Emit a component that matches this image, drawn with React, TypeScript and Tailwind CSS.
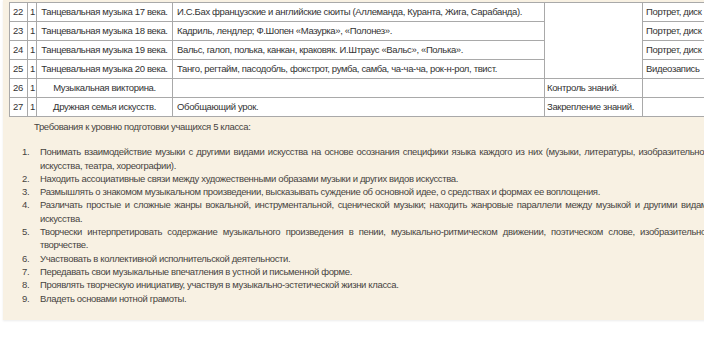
const rows = [
  { n: "22", h: "1", topic: "Танцевальная музыка 17 века.", content: "И.С.Бах французские и английские сюиты (Аллеманда, Куранта, Жига, Сарабанда).", aid: "Портрет, диск" },
  { n: "23", h: "1", topic: "Танцевальная музыка 18 века.", content: "Кадриль, лендлер; Ф.Шопен «Мазурка», «Полонез».", aid: "Портрет, диск" },
  { n: "24", h: "1", topic: "Танцевальная музыка 19 века.", content: "Вальс, галоп, полька, канкан, краковяк. И.Штраус «Вальс», «Полька».", aid: "Портрет, диск" },
  { n: "25", h: "1", topic: "Танцевальная музыка 20 века.", content: "Танго, регтайм, пасодобль, фокстрот, румба, самба, ча-ча-ча, рок-н-рол, твист.", aid: "Видеозапись" },
];

const requirements = [
  "Понимать взаимодействие музыки с другими видами искусства на основе осознания специфики языка каждого из них (музыки, литературы, изобразительного искусства, театра, хореографии).",
  "Находить ассоциативные связи между художественными образами музыки и других видов искусства.",
  "Размышлять о знакомом музыкальном произведении, высказывать суждение об основной идее, о средствах и формах ее воплощения.",
  "Различать простые и сложные жанры вокальной, инструментальной, сценической музыки; находить жанровые параллели между музыкой и другими видами искусства.",
  "Творчески интерпретировать содержание музыкального произведения в пении, музыкально-ритмическом движении, поэтическом слове, изобразительном творчестве.",
  "Участвовать в коллективной исполнительской деятельности.",
  "Передавать свои музыкальные впечатления в устной и письменной форме.",
  "Проявлять творческую инициативу, участвуя в музыкально-эстетической жизни класса.",
  "Владеть основами нотной грамоты.",
];

const td = "border border-[#a9a9a9] h-[19px] p-0 align-middle whitespace-nowrap overflow-hidden";

export default function App() {
  return (
    <div className="w-[704px] h-[346px] overflow-hidden bg-white font-['Liberation_Sans',Arial,sans-serif] text-[9.5px] tracking-[-0.35px]">
      <div className="w-[730px] ml-[3px] bg-[#f8f1e3] pt-[2px] pb-[15px] shadow-[0_1px_2px_rgba(0,0,0,0.08)]">
        <table className="ml-[6px] border-collapse bg-white text-[#333] table-fixed w-[704px]">
          <colgroup>
            <col className="w-[18px]" />
            <col className="w-[9px]" />
            <col className="w-[136px]" />
            <col className="w-[372px]" />
            <col className="w-[98px]" />
            <col className="w-[71px]" />
          </colgroup>
          <tbody>
            {rows.map((r, i) => (
              <tr key={r.n}>
                <td className={`${td} pl-[3px]`}>{r.n}</td>
                <td className={`${td} pl-[2px]`}>{r.h}</td>
                <td className={`${td} text-center`}>{r.topic}</td>
                <td className={`${td} pl-[4px]`}>{r.content}</td>
                {i === 0 && <td rowSpan={4} className={td}></td>}
                <td className={`${td} pl-[3px]`}>{r.aid}</td>
              </tr>
            ))}
            <tr>
              <td className={`${td} pl-[3px]`}>26</td>
              <td className={`${td} pl-[2px]`}>1</td>
              <td className={`${td} text-center`}>Музыкальная викторина.</td>
              <td className={td}></td>
              <td className={`${td} pl-[2px]`}>Контроль знаний.</td>
              <td className={td}></td>
            </tr>
            <tr>
              <td className={`${td} pl-[3px]`}>27</td>
              <td className={`${td} pl-[2px]`}>1</td>
              <td className={`${td} text-center`}>Дружная семья искусств.</td>
              <td className={`${td} pl-[4px]`}>Обобщающий урок.</td>
              <td className={`${td} pl-[2px]`}>Закрепление знаний.</td>
              <td className={td}></td>
            </tr>
          </tbody>
        </table>

        <div className="text-[#47443f] leading-[13.3px]">
          <p className="ml-[31px] mt-[3px]">Требования к уровню подготовки учащихся 5 класса:</p>
          <ol className="ml-[19px] mt-[12px] w-[690px]">
            {requirements.map((t, i) => (
              <li key={i} className="flex">
                <span className="w-[18px] shrink-0">{i + 1}.</span>
                <span className="text-justify">{t}</span>
              </li>
            ))}
          </ol>
        </div>
      </div>
    </div>
  );
}
